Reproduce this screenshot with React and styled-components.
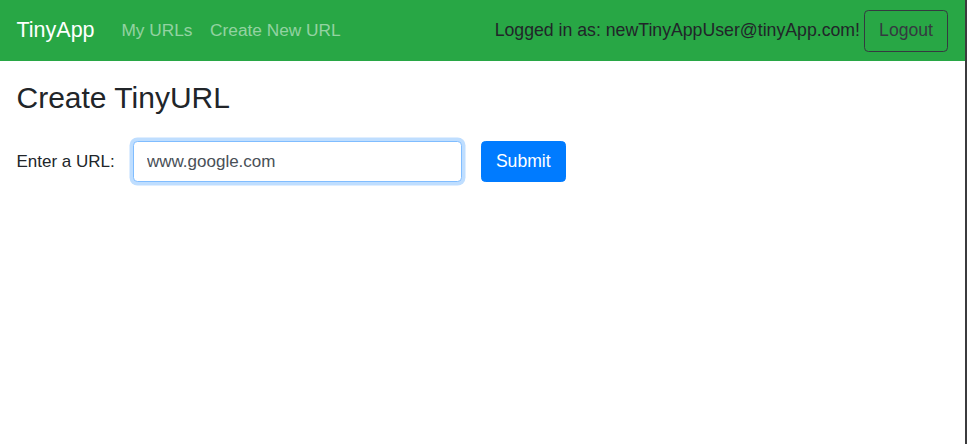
import React from "react";
import styled, { createGlobalStyle } from "styled-components";

const GlobalStyle = createGlobalStyle`
  html, body { margin: 0; padding: 0; background: #fff; }
  body {
    font-family: "Liberation Sans", Arial, sans-serif;
    font-size: 17px;
    line-height: 1.5;
    color: #212529;
  }
  * { box-sizing: border-box; }
`;

const Frame = styled.div`
  display: flex;
  flex-direction: column;
  min-height: 100vh;
  border-right: 2px solid #3b3b3d;
`;

const Navbar = styled.nav`
  display: flex;
  align-items: center;
  height: 61px;
  padding: 0 17px 0 16.5px;
  background: #28a745;
`;

const Brand = styled.a`
  font-size: 21.5px;
  line-height: 1.5;
  color: #fff;
  margin-right: 18px;
  text-decoration: none;
`;

const NavLinks = styled.div`
  display: flex;
  align-items: center;
  flex: 1;
`;

const NavLink = styled.a`
  padding: 8.8px;
  font-size: 17.3px;
  color: rgba(255, 255, 255, 0.5);
  text-decoration: none;
`;

const UserArea = styled.div`
  display: flex;
  align-items: center;
  gap: 4px;
`;

const UserText = styled.span`
  color: #212529;
  font-size: 17.7px;
`;

const OutlineButton = styled.button`
  font: inherit;
  font-size: 17.6px;
  width: 84px;
  height: 42px;
  padding: 0;
  color: #343a40;
  background: transparent;
  border: 1px solid #343a40;
  border-radius: 4.4px;
  cursor: pointer;
`;

const Main = styled.main`
  padding: 19px 16.5px;
`;

const Title = styled.h3`
  margin: 0 0 25px;
  font-size: 30px;
  font-weight: 500;
  line-height: 1.2;
  color: #212529;
`;

const Form = styled.form`
  display: flex;
  align-items: center;
`;

const Label = styled.label`
  margin-right: 18px;
`;

const UrlInput = styled.input`
  width: 329px;
  height: 41px;
  padding: 0 13.2px;
  font: inherit;
  color: #495057;
  background: #fff;
  border: 1px solid #80bdff;
  border-radius: 4.4px;
  outline: none;
  box-shadow: 0 0 0 3.5px rgba(0, 123, 255, 0.25);
  caret-color: #212529;
`;

const PrimaryButton = styled.button`
  margin-left: 19px;
  width: 85px;
  height: 41px;
  padding: 0;
  font: inherit;
  font-size: 17.6px;
  color: #fff;
  background: #007bff;
  border: 1px solid #007bff;
  border-radius: 4.4px;
  cursor: pointer;
`;

export default function App() {
  return (
    <>
      <GlobalStyle />
      <Frame>
        <Navbar>
          <Brand href="#">TinyApp</Brand>
          <NavLinks>
            <NavLink href="#">My URLs</NavLink>
            <NavLink href="#">Create New URL</NavLink>
          </NavLinks>
          <UserArea>
            <UserText>Logged in as: newTinyAppUser@tinyApp.com!</UserText>
            <OutlineButton type="button">Logout</OutlineButton>
          </UserArea>
        </Navbar>
        <Main>
          <Title>Create TinyURL</Title>
          <Form onSubmit={(e) => e.preventDefault()}>
            <Label htmlFor="longURL">Enter a URL:</Label>
            <UrlInput id="longURL" type="text" defaultValue="www.google.com" autoFocus />
            <PrimaryButton type="submit">Submit</PrimaryButton>
          </Form>
        </Main>
      </Frame>
    </>
  );
}
